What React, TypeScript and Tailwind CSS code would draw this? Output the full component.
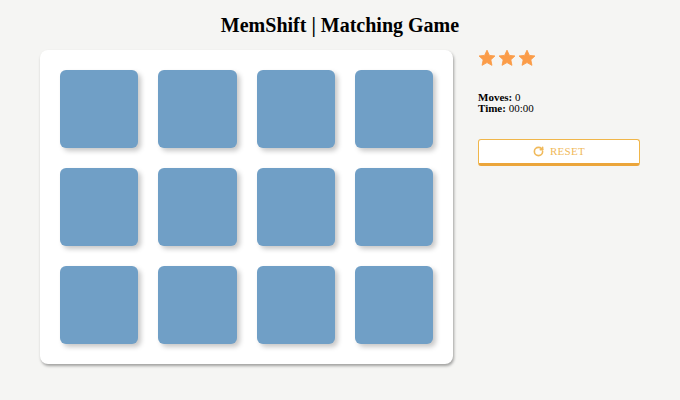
import { RotateCw } from 'lucide-react'

const CARDS = Array.from({ length: 12 }, (_, i) => i)

function Star() {
  return (
    <svg viewBox="0 0 24 24" className="w-[18px] h-[18px]" fill="#fb9c48">
      <path d="M12 1.6l3.2 6.9 7.4.8-5.5 5.1 1.5 7.4L12 18.1l-6.6 3.7 1.5-7.4L1.4 9.3l7.4-.8z" stroke="#fb9c48" strokeWidth="1.2" strokeLinejoin="round" />
    </svg>
  )
}

export default function App() {
  return (
    <div className="w-[680px] h-[400px] bg-[#f5f5f3] font-['Liberation_Serif',serif] text-black">
      <h1 className="h-[50px] pt-[12px] text-center text-[20px] font-bold leading-[26px]">MemShift | Matching Game</h1>
      <div className="w-[600px] mx-auto flex gap-[25px]">
        <div className="w-[413px] h-[314px] bg-white rounded-lg p-5 grid grid-cols-4 gap-5 shadow-[1px_2px_3px_rgba(0,0,0,0.35)]">
          {CARDS.map(i => (
            <div key={i} className="h-[78px] rounded-[6px] bg-[#709fc6] shadow-[3px_3px_5px_rgba(0,0,0,0.22)]" />
          ))}
        </div>
        <div className="flex-1">
          <div className="flex gap-[2px] -mt-[1px]">
            <Star /><Star /><Star />
          </div>
          <div className="mt-[25px] text-[11px] leading-[11px]">
            <div><b>Moves:</b> 0</div>
            <div><b>Time:</b> 00:00</div>
          </div>
          <button className="mt-[25px] w-[162px] h-[27px] bg-white border border-[#f0b64a] border-b-[3px] border-b-[#eba53a] rounded-[3px] flex items-center justify-center gap-[6px] text-[#f0b95a] text-[11px] tracking-wide">
            <RotateCw className="w-[11px] h-[11px]" strokeWidth={3.5} />
            RESET
          </button>
        </div>
      </div>
    </div>
  )
}
